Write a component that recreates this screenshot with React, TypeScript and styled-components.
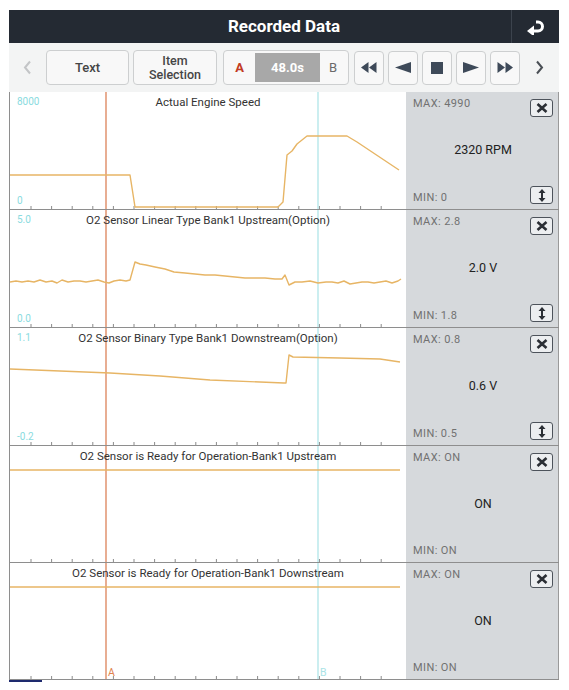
import * as React from 'react';
import styled, { createGlobalStyle } from 'styled-components';

const GlobalStyle = createGlobalStyle`
  body {
    margin: 0;
    background: #fff;
    font-family: Roboto, "Liberation Sans", Arial, sans-serif;
  }
`;

type RowData = {
  title: string;
  top?: string;
  bottom?: string;
  max: string;
  value: string;
  min: string;
  scale: boolean;
  points: string;
  height: number;
};

const rows: Array<RowData> = [
  {
    title: 'Actual Engine Speed',
    top: '8000',
    bottom: '0',
    max: 'MAX: 4990',
    value: '2320 RPM',
    min: 'MIN: 0',
    scale: true,
    height: 118,
    points:
      '0,83 120,83 125,115 268,115 273,110 277,63 282,59 287,52 297,44 337,44 347,50 377,70 389,78',
  },
  {
    title: 'O2 Sensor Linear Type Bank1 Upstream(Option)',
    top: '5.0',
    bottom: '0.0',
    max: 'MAX: 2.8',
    value: '2.0 V',
    min: 'MIN: 1.8',
    scale: true,
    height: 118,
    points:
      '0,72 6,71 12,72 18,71 24,72 30,70 36,72 42,71 47,73 52,70 58,72 64,71 70,71 76,72 82,71 88,70 94,72 99,73 104,71 110,70 116,71 120,70 125,52 130,54 136,55 145,57 155,59 164,62 175,63 185,64 195,65 205,65 215,66 225,67 235,68 245,68 255,68 265,69 272,69 275,65 279,75 285,72 292,72 300,71 308,73 316,72 322,72 328,73 334,71 340,74 346,73 352,72 358,72 364,73 370,72 376,71 382,73 388,71 391,69',
  },
  {
    title: 'O2 Sensor Binary Type Bank1 Downstream(Option)',
    top: '1.1',
    bottom: '-0.2',
    max: 'MAX: 0.8',
    value: '0.6 V',
    min: 'MIN: 0.5',
    scale: true,
    height: 118,
    points: '0,41 100,45 150,48 200,52 274,55 276,55 279,27 283,29 330,30 370,31 390,34',
  },
  {
    title: 'O2 Sensor is Ready for Operation-Bank1 Upstream',
    max: 'MAX: ON',
    value: 'ON',
    min: 'MIN: ON',
    scale: false,
    height: 117,
    points: '0,24 390,24',
  },
  {
    title: 'O2 Sensor is Ready for Operation-Bank1 Downstream',
    max: 'MAX: ON',
    value: 'ON',
    min: 'MIN: ON',
    scale: false,
    height: 117,
    points: '0,24 390,24',
  },
];

const CURSOR_A = 96;
const CURSOR_B = 308;
const ticks = Array.from({ length: 18 }, (_, i) => 21 + i * 20.6);

export default function App() {
  return (
    <>
      <GlobalStyle />
      <Frame>
        <Header>
          <HeaderTitle>Recorded Data</HeaderTitle>
          <ReturnBox>
            <ReturnIcon />
          </ReturnBox>
        </Header>
        <Toolbar>
          <NavArrow dim>
            <Chevron dir="left" />
          </NavArrow>
          <ToolButton width={83} gap={4}>
            Text
          </ToolButton>
          <ToolButton width={84} gap={6} small>
            Item
            <br />
            Selection
          </ToolButton>
          <CursorGroup>
            <CursorA>A</CursorA>
            <TimeBox>48.0s</TimeBox>
            <CursorB>B</CursorB>
          </CursorGroup>
          <TransportButton>
            <TransportIcon kind="rew" />
          </TransportButton>
          <TransportButton>
            <TransportIcon kind="back" />
          </TransportButton>
          <TransportButton>
            <TransportIcon kind="stop" />
          </TransportButton>
          <TransportButton>
            <TransportIcon kind="play" />
          </TransportButton>
          <TransportButton last>
            <TransportIcon kind="ff" />
          </TransportButton>
          <NavArrow>
            <Chevron dir="right" />
          </NavArrow>
        </Toolbar>
        {rows.map((row, index) => (
          <DataRow key={index} row={row} last={index === rows.length - 1} />
        ))}
        <FooterMark />
      </Frame>
    </>
  );
}

const DataRow: React.FC<{ row: RowData; last: boolean }> = ({ row, last }) => {
  const h = row.height - 1;
  return (
    <Row height={row.height}>
      <GraphCell>
        <svg width="396" height={h} viewBox={`0 0 396 ${h}`}>
          {ticks.map((x) => (
            <line key={x} x1={x} x2={x} y1={h - 3} y2={h} stroke="#8a8a8a" strokeWidth="1" />
          ))}
          <line x1={CURSOR_A} x2={CURSOR_A} y1={0} y2={h} stroke="#d9774a" strokeWidth="1.2" />
          <line x1={CURSOR_B} x2={CURSOR_B} y1={0} y2={h} stroke="#a9e3e6" strokeWidth="1.2" />
          <polyline
            points={row.points}
            fill="none"
            stroke="#e7b565"
            strokeWidth="1.4"
            strokeLinejoin="round"
          />
          {row.top && (
            <AxisText x="7" y="13">
              {row.top}
            </AxisText>
          )}
          {row.bottom && (
            <AxisText x="7" y="112">
              {row.bottom}
            </AxisText>
          )}
          {last && (
            <>
              <CursorLabel x={CURSOR_A + 2} y={h - 3} fill="#e0844f">
                A
              </CursorLabel>
              <CursorLabel x={CURSOR_B + 2} y={h - 3} fill="#a9e3e6">
                B
              </CursorLabel>
            </>
          )}
        </svg>
        <ChartTitle>{row.title}</ChartTitle>
      </GraphCell>
      <SidePanel>
        <PanelTop>
          <PanelLabel>{row.max}</PanelLabel>
          <IconButton height={18}>
            <CloseIcon />
          </IconButton>
        </PanelTop>
        <PanelValue>{row.value}</PanelValue>
        <PanelBottom>
          <PanelLabel>{row.min}</PanelLabel>
          {row.scale && (
            <IconButton height={18}>
              <ScaleIcon />
            </IconButton>
          )}
        </PanelBottom>
      </SidePanel>
    </Row>
  );
};

const ReturnIcon = () => (
  <svg width="20" height="16" viewBox="0 0 20 16">
    <path d="M7 12 H12 A4.5 4.5 0 0 0 12 3 H10" fill="none" stroke="#fff" strokeWidth="3" />
    <path d="M1 12 L8 6.5 V17.5 Z" fill="#fff" />
  </svg>
);

const Chevron: React.FC<{ dir: 'left' | 'right' }> = ({ dir }) => (
  <svg width="9" height="15" viewBox="0 0 9 15">
    <path
      d={dir === 'left' ? 'M7 1.5 L2 7.5 L7 13.5' : 'M2 1.5 L7 7.5 L2 13.5'}
      fill="none"
      stroke="currentColor"
      strokeWidth="2"
    />
  </svg>
);

const TransportIcon: React.FC<{ kind: 'rew' | 'back' | 'stop' | 'play' | 'ff' }> = ({ kind }) => {
  const c = '#3e4a59';
  if (kind === 'stop') {
    return (
      <svg width="12" height="12" viewBox="0 0 12 12">
        <rect x="0" y="0" width="12" height="12" fill={c} />
      </svg>
    );
  }
  if (kind === 'back' || kind === 'play') {
    return (
      <svg width="16" height="11" viewBox="0 0 16 11">
        <path d={kind === 'back' ? 'M0 5.5 L16 0 V11 Z' : 'M16 5.5 L0 0 V11 Z'} fill={c} />
      </svg>
    );
  }
  return (
    <svg width="16" height="11" viewBox="0 0 16 11">
      <path
        d={kind === 'rew' ? 'M0 5.5 L7.5 0 V11 Z M8 5.5 L15.5 0 V11 Z' : 'M16 5.5 L8.5 0 V11 Z M8 5.5 L0.5 0 V11 Z'}
        fill={c}
      />
    </svg>
  );
};

const CloseIcon = () => (
  <svg width="12" height="10" viewBox="0 0 12 10">
    <path d="M1.5 1 L10.5 9 M10.5 1 L1.5 9" stroke="#2b2f35" strokeWidth="2.6" />
  </svg>
);

const ScaleIcon = () => (
  <svg width="8" height="13" viewBox="0 0 8 13">
    <path d="M4 3 V10" stroke="#2b2f35" strokeWidth="2" />
    <path d="M4 0 L7.5 4 H0.5 Z M4 13 L7.5 9 H0.5 Z" fill="#2b2f35" />
  </svg>
);

const Frame = styled.div`
  margin: 10px 0 0 9px;
  width: 550px;
`;

const Header = styled.div`
  display: flex;
  height: 33px;
  background: #242a33;
  color: #fff;
`;

const HeaderTitle = styled.div`
  flex: 1;
  padding-left: 48px;
  text-align: center;
  font-size: 17px;
  font-weight: 700;
  line-height: 33px;
`;

const ReturnBox = styled.div`
  width: 47px;
  border-left: 1px solid #3c434d;
  display: flex;
  align-items: center;
  justify-content: center;
`;

const Toolbar = styled.div`
  display: flex;
  align-items: center;
  height: 49px;
  background: #f3f4f4;
`;

const NavArrow = styled.div<{ dim?: boolean }>`
  display: flex;
  align-items: center;
  justify-content: center;
  width: ${(p) => (p.dim ? '37px' : 'auto')};
  flex: ${(p) => (p.dim ? 'none' : '1')};
  color: ${(p) => (p.dim ? '#c3c5c7' : '#4a4f55')};
`;

const ButtonBase = styled.div`
  box-sizing: border-box;
  display: flex;
  align-items: center;
  justify-content: center;
  height: 35px;
  border: 1px solid #cdcfd0;
  border-radius: 4px;
  background: #f8f8f8;
`;

const ToolButton = styled(ButtonBase)<{ width: number; gap: number; small?: boolean }>`
  width: ${(p) => p.width}px;
  margin-right: ${(p) => p.gap}px;
  text-align: center;
  color: #454545;
  font-weight: 500;
  font-size: ${(p) => (p.small ? '12.5px' : '13px')};
  line-height: ${(p) => (p.small ? '14px' : '15px')};
`;

const CursorGroup = styled(ButtonBase)`
  width: 126px;
  margin-right: 5px;
  justify-content: flex-start;
  padding: 0 2px;
`;

const CursorA = styled.span`
  width: 27px;
  text-align: center;
  color: #c23a22;
  font-weight: 700;
  font-size: 13px;
`;

const TimeBox = styled.div`
  width: 65px;
  height: 29px;
  margin-left: 2px;
  background: #a8a8a8;
  color: #fff;
  font-weight: 700;
  font-size: 13px;
  line-height: 29px;
  text-align: center;
`;

const CursorB = styled.span`
  flex: 1;
  text-align: center;
  color: #6a6a6a;
  font-size: 13px;
`;

const TransportButton = styled(ButtonBase)<{ last?: boolean }>`
  width: 30px;
  height: 34px;
  margin-right: ${(p) => (p.last ? '0' : '4px')};
`;

const Row = styled.div<{ height: number }>`
  box-sizing: border-box;
  display: flex;
  height: ${(p) => p.height}px;
  border-bottom: 1px solid #8e8e8e;
`;

const GraphCell = styled.div`
  position: relative;
  width: 397px;
  box-sizing: border-box;
  border-left: 1px solid #8e8e8e;
  background: #fff;

  svg {
    display: block;
  }
`;

const ChartTitle = styled.div`
  position: absolute;
  top: 3px;
  left: 0;
  right: 0;
  text-align: center;
  font-size: 11.5px;
  color: #333;
  white-space: nowrap;
`;

const AxisText = styled.text`
  font-family: Roboto, "Liberation Sans", sans-serif;
  font-size: 10px;
  fill: #8adbe0;
`;

const CursorLabel = styled.text`
  font-family: Roboto, "Liberation Sans", sans-serif;
  font-size: 10.5px;
`;

const SidePanel = styled.div`
  flex: 1;
  display: flex;
  flex-direction: column;
  justify-content: space-between;
  padding: 4px 5px 5px 7px;
  background: #d6d9dc;
  border-right: 1px solid #9a9a9a;
`;

const PanelTop = styled.div`
  display: flex;
  justify-content: space-between;
  align-items: flex-start;
  height: 22px;
`;

const PanelBottom = styled.div`
  display: flex;
  justify-content: space-between;
  align-items: flex-end;
  height: 19px;
`;

const PanelLabel = styled.span`
  font-size: 11px;
  letter-spacing: 0.4px;
  color: #717171;
  line-height: 12px;
  margin-top: 2px;
`;

const PanelValue = styled.div`
  text-align: center;
  font-size: 12.5px;
  color: #222;
  margin-bottom: 4px;
`;

const IconButton = styled.div<{ height: number }>`
  box-sizing: border-box;
  display: flex;
  align-items: center;
  justify-content: center;
  width: 23px;
  height: ${(p) => p.height}px;
  margin-top: 3px;
  border: 1.5px solid #4d535b;
  border-radius: 3px;
  background: #eceef0;
`;

const FooterMark = styled.div`
  width: 33px;
  height: 2px;
  background: #1e2a6e;
`;
